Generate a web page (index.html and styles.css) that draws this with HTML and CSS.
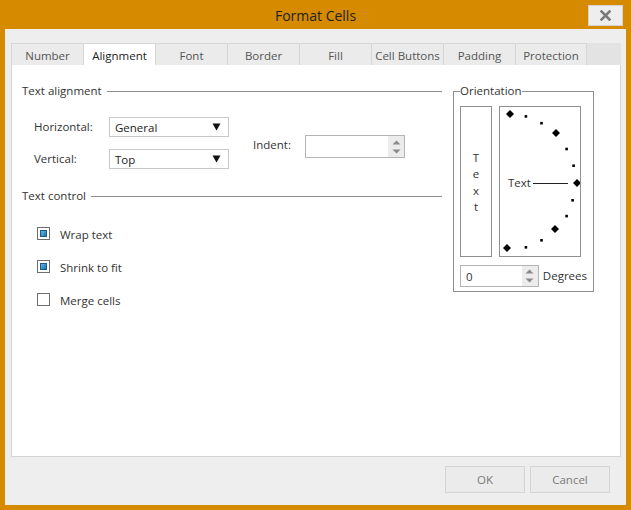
FILE: index.html
```html
<!DOCTYPE html>
<html>
<head>
<meta charset="utf-8">
<link rel="stylesheet" href="styles.css">
</head>
<body>
<div class="window">
  <div class="titlebar">
    <span class="title">Format Cells</span>
    <div class="close">
      <svg width="11" height="11" viewBox="0 0 11 11"><path d="M1.5 1.5 L9.5 9.5 M9.5 1.5 L1.5 9.5" stroke="#7a7a7a" stroke-width="2.6" stroke-linecap="square"/></svg>
    </div>
  </div>
  <div class="body">
    <div class="tabs">
      <div class="tab">Number</div>
      <div class="tab active">Alignment</div>
      <div class="tab">Font</div>
      <div class="tab">Border</div>
      <div class="tab">Fill</div>
      <div class="tab">Cell Buttons</div>
      <div class="tab">Padding</div>
      <div class="tab last">Protection</div>
      <div class="tab-fill"></div>
    </div>
    <div class="panel">
      <div class="left">
        <div class="heading"><span>Text alignment</span><i class="rule"></i></div>
        <div class="align-block">
          <div class="align-grid">
            <span class="lbl">Horizontal:</span>
            <div class="select"><span>General</span><svg width="9" height="8" viewBox="0 0 9 8"><path d="M0.5 0.5 H8.5 L4.5 7.5 Z" fill="#111"/></svg></div>
            <span class="lbl">Vertical:</span>
            <div class="select"><span>Top</span><svg width="9" height="8" viewBox="0 0 9 8"><path d="M0.5 0.5 H8.5 L4.5 7.5 Z" fill="#111"/></svg></div>
          </div>
          <div class="indent">
            <span class="lbl indent-lbl">Indent:</span>
            <div class="spin wide">
              <span class="val"></span>
              <span class="spin-btns">
                <svg width="9" height="5" viewBox="0 0 9 5"><path d="M0.5 4.5 L4.5 0.5 L8.5 4.5 Z" fill="#8a8a8a"/></svg>
                <svg width="9" height="5" viewBox="0 0 9 5"><path d="M0.5 0.5 L8.5 0.5 L4.5 4.5 Z" fill="#8a8a8a"/></svg>
              </span>
            </div>
          </div>
        </div>
        <div class="heading second"><span>Text control</span><i class="rule"></i></div>
        <div class="checks">
          <div class="check"><span class="box checked"><i></i></span><span>Wrap text</span></div>
          <div class="check"><span class="box checked"><i></i></span><span>Shrink to fit</span></div>
          <div class="check"><span class="box"></span><span>Merge cells</span></div>
        </div>
      </div>
      <fieldset class="orient">
        <legend>Orientation</legend>
        <div class="orient-row">
          <div class="vtext"><span>T</span><span>e</span><span>x</span><span>t</span></div>
          <div class="dial">
            <svg width="80" height="149" viewBox="0 0 80 149">
              <g fill="#000">
                <path d="M10 3 L14 7 L10 11 L6 7 Z"/>
                <rect x="24.6" y="8.1" width="2.6" height="2.6"/>
                <rect x="40.2" y="14.9" width="2.6" height="2.6"/>
                <path d="M56 22 L60 26 L56 30 L52 26 Z"/>
                <rect x="65.3" y="40.7" width="2.6" height="2.6"/>
                <rect x="72.3" y="57.4" width="2.6" height="2.6"/>
                <path d="M77 72 L81 76 L77 80 L73 76 Z"/>
                <rect x="71.3" y="92" width="2.6" height="2.6"/>
                <rect x="65.3" y="107.8" width="2.6" height="2.6"/>
                <path d="M55 118 L59 122 L55 126 L51 122 Z"/>
                <rect x="40.2" y="132" width="2.6" height="2.6"/>
                <rect x="24.6" y="139" width="2.6" height="2.6"/>
                <path d="M7 137 L11 141 L7 145 L3 141 Z"/>
              </g>
              <text x="8" y="80" class="dial-text">Text</text>
              <line x1="33" y1="76.5" x2="68" y2="76.5" stroke="#222" stroke-width="1"/>
            </svg>
          </div>
        </div>
        <div class="deg-row">
          <div class="spin narrow">
            <span class="val">0</span>
            <span class="spin-btns">
              <svg width="9" height="5" viewBox="0 0 9 5"><path d="M0.5 4.5 L4.5 0.5 L8.5 4.5 Z" fill="#8a8a8a"/></svg>
              <svg width="9" height="5" viewBox="0 0 9 5"><path d="M0.5 0.5 L8.5 0.5 L4.5 4.5 Z" fill="#8a8a8a"/></svg>
            </span>
          </div>
          <span class="lbl">Degrees</span>
        </div>
      </fieldset>
    </div>
    <div class="buttons">
      <div class="btn">OK</div>
      <div class="btn">Cancel</div>
    </div>
  </div>
</div>
</body>
</html>
```

FILE: styles.css
```css
* { box-sizing: border-box; }
html, body { margin: 0; padding: 0; }
body {
  background: #d68a00;
  font-family: "Open Sans", "Noto Sans", sans-serif;
  font-size: 11.5px;
  color: #333;
}
.window {
  width: 631px;
  height: 510px;
  display: flex;
  flex-direction: column;
  background: #d68a00;
}
.titlebar {
  height: 29px;
  display: grid;
  grid-template-columns: 1fr auto 1fr;
  align-items: center;
}
.title {
  grid-column: 2;
  font-size: 14px;
  color: #222;
  line-height: 29px;
  padding-top: 1px;
}
.close {
  grid-column: 3;
  justify-self: end;
  align-self: start;
  margin-top: 5px;
  margin-right: 8px;
  width: 35px;
  height: 21px;
  background: #eeeeee;
  border: 1px solid #d2d2d2;
  display: flex;
  align-items: center;
  justify-content: center;
}
.body {
  flex: 1;
  margin: 0 5px 5px 5px;
  background: #eeeeee;
  padding: 14px 5px 0 6px;
  display: flex;
  flex-direction: column;
}
.tabs {
  display: flex;
  height: 22px;
}
.tab {
  width: 72px;
  height: 22px;
  background: #ebebeb;
  border-top: 1px solid #d6d6d6;
  border-left: 1px solid #d6d6d6;
  color: #555;
  display: flex;
  align-items: center;
  justify-content: center;
  line-height: 16px;
  padding-top: 2px;
}
.tab.last { border-right: 1px solid #d6d6d6; }
.tab.active { background: #fff; color: #222; }
.tab-fill {
  flex: 1;
  background: #e3e3e3;
}
.panel {
  height: 392px;
  background: #fff;
  border: 1px solid #d4d4d4;
  border-top: none;
  display: flex;
  align-items: flex-start;
  padding: 18px 0 0 10px;
}
.left {
  width: 420px;
}
.heading {
  display: flex;
  align-items: center;
  height: 16px;
  line-height: 16px;
  color: #333;
}
.heading .rule {
  flex: 1;
  height: 1px;
  background: #8c8c8c;
  margin-left: 5px;
  margin-top: 1px;
}
.heading.second { margin-top: 19px; }
.align-block {
  display: flex;
  align-items: flex-start;
  margin-top: 18px;
  padding-left: 12px;
}
.align-grid {
  display: grid;
  grid-template-columns: 75px 120px;
  row-gap: 12px;
  align-items: center;
}
.lbl { color: #333; line-height: 16px; }
.select {
  height: 20px;
  border: 1px solid #c9c9c9;
  display: flex;
  align-items: center;
  justify-content: space-between;
  padding: 0 7px 0 5px;
  color: #222;
}
.indent {
  display: flex;
  align-items: center;
  margin-left: 24px;
  margin-top: 18px;
}
.indent-lbl { width: 52px; margin-bottom: 4px; }
.spin {
  height: 23px;
  border: 1px solid #b4b4b4;
  display: flex;
  align-items: stretch;
  background: #fff;
}
.spin.wide { width: 100px; }
.spin.narrow { width: 79px; height: 22px; }
.spin .val {
  flex: 1;
  padding-left: 5px;
  display: flex;
  align-items: center;
  color: #333;
}
.spin-btns {
  width: 16px;
  background: #ececec;
  display: flex;
  flex-direction: column;
  align-items: center;
  justify-content: center;
  gap: 4px;
}
.checks {
  margin-top: 21px;
  padding-left: 15px;
  display: flex;
  flex-direction: column;
  gap: 17px;
}
.check {
  display: flex;
  align-items: center;
  height: 16px;
  gap: 10px;
}
.check span:last-child { margin-top: 3px; }
.box {
  width: 13px;
  height: 13px;
  border: 1px solid #6e6e6e;
  background: #fff;
  padding: 2px;
  display: block;
}
.box i {
  display: block;
  width: 7px;
  height: 7px;
  border: 1px solid #1d5a85;
  background: linear-gradient(135deg, #5fb4e6, #1f74ad);
}
.orient {
  margin: 0 0 0 11px;
  width: 141px;
  border: 1px solid #8f8f8f;
  padding: 0 6px 4px 6px;
  min-width: 0;
}
.orient legend {
  padding: 0;
  line-height: 16px;
  color: #333;
}
.orient-row {
  display: flex;
  gap: 7px;
  margin-top: 7px;
}
.vtext {
  width: 32px;
  height: 151px;
  border: 1px solid #8f8f8f;
  display: flex;
  flex-direction: column;
  align-items: center;
  justify-content: center;
  line-height: 16.5px;
  padding-top: 2px;
  color: #333;
}
.dial {
  width: 82px;
  height: 151px;
  border: 1px solid #8f8f8f;
}
.dial svg { display: block; }
.dial-text {
  font-family: "Open Sans", "Noto Sans", sans-serif;
  font-size: 11.5px;
  fill: #333;
}
.deg-row {
  display: flex;
  align-items: center;
  gap: 4px;
  margin-top: 8px;
}
.buttons {
  display: flex;
  justify-content: flex-end;
  gap: 5px;
  margin-top: 9px;
  margin-right: 11px;
}
.btn {
  width: 80px;
  height: 27px;
  background: #ebebeb;
  border: 1px solid #d4d4d4;
  color: #7a7a7a;
  display: flex;
  align-items: center;
  justify-content: center;
}
```
